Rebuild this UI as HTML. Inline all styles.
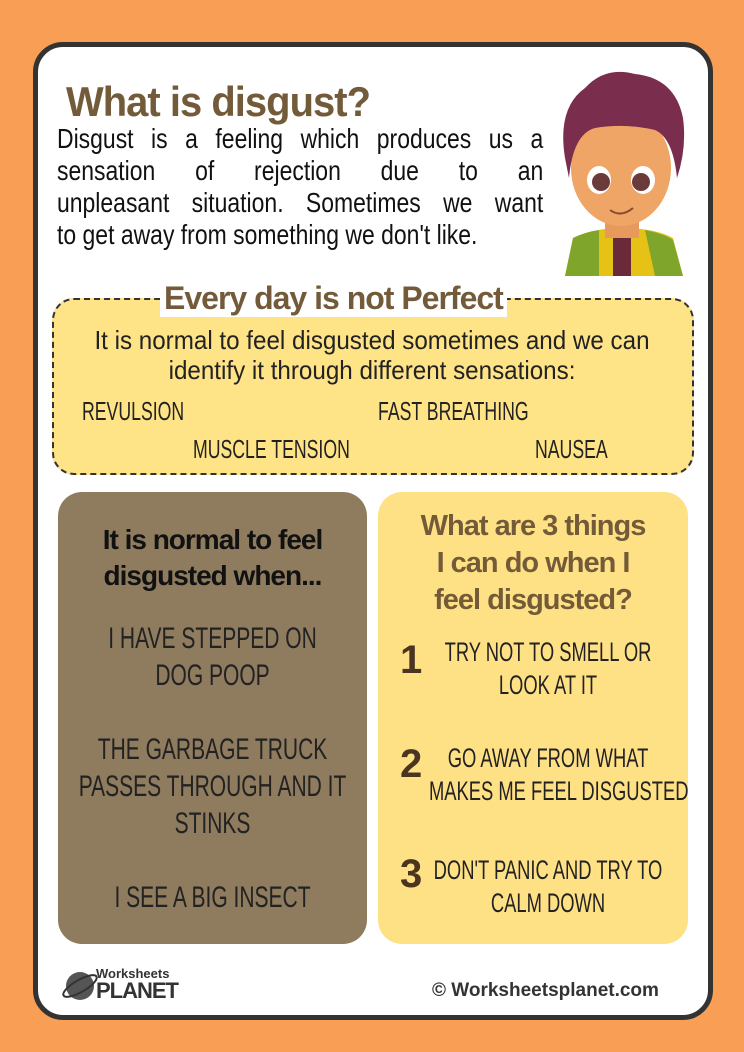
<!DOCTYPE html>
<html><head><meta charset="utf-8"><style>
body{margin:0;width:744px;height:1052px;background:#f99f55;position:relative;overflow:hidden;font-family:"Liberation Sans",sans-serif}
.card{position:absolute;left:33px;top:42px;width:670px;height:968px;background:#fff;border:5px solid #333;border-radius:30px}
.a{position:absolute;white-space:nowrap}
h1{position:absolute;left:66px;top:78px;margin:0;font-size:42px;color:#735b3a;font-weight:bold;letter-spacing:-1px;transform:scaleX(.95);transform-origin:left top}
.intro{position:absolute;left:57px;top:123px;width:593px;font-size:28px;line-height:32px;color:#111;transform:scaleX(.82);transform-origin:left top}
.intro div{text-align:justify;text-align-last:justify;white-space:nowrap}
.intro div.l{text-align-last:left}
.dash{position:absolute;left:52px;top:298px;width:638px;height:173px;background:#ffe387;border:2.5px dashed #333;border-radius:22px}
.brown{position:absolute;left:58px;top:492px;width:309px;height:452px;background:#8f7b5e;border-radius:24px}
.yel{position:absolute;left:378px;top:492px;width:310px;height:452px;background:#ffe185;border-radius:24px}
.cen{position:absolute;text-align:center;left:0;right:0}
.n{font-size:26px;color:#222;transform:scaleX(.68);transform-origin:left top}
.cz{transform:scaleX(.7);transform-origin:center top}
.cy{transform:scaleX(.68);transform-origin:center top}
</style></head><body>
<div class="card"></div>
<h1>What is disgust?</h1>
<div class="intro"><div>Disgust is a feeling which produces us a</div><div>sensation of rejection due to an</div><div>unpleasant situation. Sometimes we want</div><div class="l">to get away from something we don't like.</div></div>
<svg class="a" style="left:555px;top:68px" width="135" height="208" viewBox="0 0 135 208">
<path d="M10 208 L18 170 Q40 160 66 160 Q100 160 118 170 L128 208Z" fill="#e7c216"/>
<path d="M10 208 L18 170 Q30 164 44 162 L44 208Z M90 162 Q110 166 118 172 L128 208 L100 208Z" fill="#7fa52a"/>
<rect x="58" y="165" width="18" height="43" fill="#6b2a3a"/>
<rect x="50" y="130" width="34" height="40" fill="#e79a5b"/>
<ellipse cx="66" cy="100" rx="50" ry="58" fill="#eea565"/>
<path d="M10 90 Q2 40 30 20 Q50 -2 80 6 Q120 10 128 50 Q132 80 122 110 Q118 70 100 62 Q70 55 40 60 Q18 66 14 110Z" fill="#7a2d4c"/>
<ellipse cx="44" cy="112" rx="12" ry="14" fill="#fff"/><ellipse cx="88" cy="112" rx="12" ry="14" fill="#fff"/>
<circle cx="46" cy="114" r="9" fill="#6b3a3a"/><circle cx="86" cy="114" r="9" fill="#6b3a3a"/>
<path d="M55 142 Q66 150 78 140" stroke="#8a4a30" stroke-width="2" fill="none"/>
</svg>
<div class="dash"></div>
<div class="a" style="left:160px;top:280px;background:#fff;padding:0 4px;font-size:32px;font-weight:bold;color:#735b3a;letter-spacing:-1px">Every day is not Perfect</div>
<div class="cen" style="top:325px;font-size:26px;line-height:30px;color:#222;left:-60px;right:-60px;transform:scaleX(.93);transform-origin:center top">It is normal to feel disgusted sometimes and we can<br>identify it through different sensations:</div>
<div class="a n" style="left:82px;top:396px">REVULSION</div>
<div class="a n" style="left:378px;top:396px">FAST BREATHING</div>
<div class="a n" style="left:193px;top:434px">MUSCLE TENSION</div>
<div class="a n" style="left:535px;top:434px">NAUSEA</div>
<div class="brown">
<div class="cen" style="top:30px;font-size:28px;line-height:36px;font-weight:bold;color:#111;letter-spacing:-1px">It is normal to feel<br>disgusted when...</div>
<div class="cen cz" style="top:128px;font-size:30px;line-height:37px;color:#222;left:-60px;right:-60px">I HAVE STEPPED ON<br>DOG POOP<br><br>THE GARBAGE TRUCK<br>PASSES THROUGH AND IT<br>STINKS<br><br>I SEE A BIG INSECT</div>
</div>
<div class="yel">
<div class="cen" style="top:16px;font-size:29px;line-height:37px;font-weight:bold;color:#735b3a;letter-spacing:-1px">What are 3 things<br>I can do when I<br>feel disgusted?</div>
<div class="a" style="left:22px;top:146px;font-size:40px;font-weight:bold;color:#4a3520">1</div>
<div class="a" style="left:22px;top:250px;font-size:40px;font-weight:bold;color:#4a3520">2</div>
<div class="a" style="left:22px;top:360px;font-size:40px;font-weight:bold;color:#4a3520">3</div>
<div class="a cy" style="left:-5px;width:350px;top:144px;text-align:center;font-size:27px;line-height:33px;color:#222">TRY NOT TO SMELL OR<br>LOOK AT IT</div>
<div class="a cy" style="left:-5px;width:350px;top:250px;text-align:center;font-size:27px;line-height:33px;color:#222">GO AWAY FROM WHAT<br>MAKES ME FEEL DISGUSTED</div>
<div class="a cy" style="left:-5px;width:350px;top:362px;text-align:center;font-size:27px;line-height:33px;color:#222">DON'T PANIC AND TRY TO<br>CALM DOWN</div>
</div>
<svg class="a" style="left:60px;top:966px" width="40" height="40"><circle cx="20" cy="20" r="14" fill="#555"/><ellipse cx="20" cy="20" rx="19" ry="6" transform="rotate(-30 20 20)" fill="none" stroke="#333" stroke-width="2"/></svg>
<div class="a" style="left:96px;top:966px;font-size:13px;font-weight:bold;color:#333">Worksheets</div>
<div class="a" style="left:96px;top:978px;font-size:22px;font-weight:bold;color:#333;letter-spacing:-1px">PLANET</div>
<div class="a" style="left:432px;top:980px;font-size:19px;font-weight:bold;color:#333">© Worksheetsplanet.com</div>
</body></html>
